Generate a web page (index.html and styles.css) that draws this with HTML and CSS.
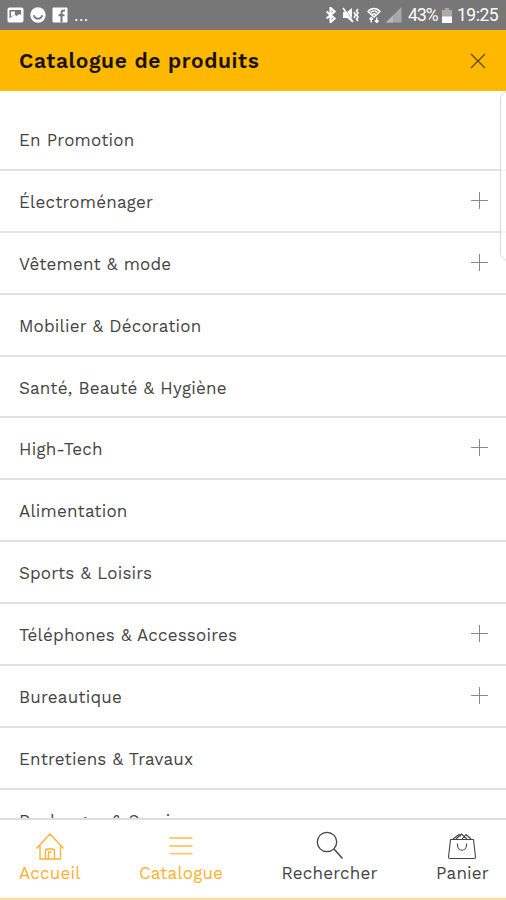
FILE: index.html
```html
<!DOCTYPE html>
<html lang="fr">
    <head>
        <meta charset="UTF-8" />
        <meta name="viewport" content="width=device-width, initial-scale=1.0" />
        <title>Catalogue de produits</title>
        <link rel="stylesheet" href="styles.css">
    </head>

    <body>
        <div class="status-bar">
            <div class="status-left">
                <svg width="17" height="16" viewBox="0 0 17 16">
                    <rect x="0.5" y="0.5" width="16" height="15" rx="2" fill="#fff" />
                    <path d="M2.500 3H14v5l-2-1-2 2-2-1-3 1.500-2.500 2z" fill="#777" />
                    <path d="M4 4.500h4V8L4 9.500z" fill="#fff" />
                </svg>
                <svg width="16" height="16" viewBox="0 0 16 16">
                    <circle cx="8" cy="8" r="7.7" fill="#fff" />
                    <path d="M3.8 8.2c1 4.6 7.4 4.6 8.4 0" fill="none" stroke="#777" stroke-width="1.8" />
                </svg>
                <svg width="16" height="16" viewBox="0 0 16 16">
                    <rect x="0.5" y="0.5" width="15" height="15" rx="1" fill="#fff" />
                    <path d="M9.5 15.5V6c0-2 1-2.8 3.5-2.5M6.5 8.3h6" fill="none" stroke="#777" stroke-width="2" />
                </svg>
                <span class="dots">...</span>
            </div>
            <div class="status-right">
                <svg class="bluetooth" width="12" height="16" viewBox="0 0 12 18">
                    <path d="M1 5l9 8-4.500 4V1L10 5l-9 8" fill="none" stroke="#fff" stroke-width="2.400" />
                </svg>
                <svg class="mute" width="17" height="16" viewBox="0 0 17 16">
                    <path d="M1 5h4l5-4v14l-5-4H1z" fill="#fff" />
                    <path d="M2 1l10 14" stroke="#777" stroke-width="1" />
                    <path d="M1 1l10 14" stroke="#fff" stroke-width="1.600" />
                    <path d="M12 5l1.500 3-1.500 3M16 2l-1.500 2L16 6l-1.500 2L16 10l-1.500 2 1.500 2" fill="none" stroke="#fff" stroke-width="1.600" />
                </svg>
                <svg class="wifi" width="14" height="16" viewBox="0 0 14 16">
                    <path d="M1 4.500c3.400-4 8.600-4 12 0L7 10z" fill="none" stroke="#fff" stroke-width="1.500" />
                    <path d="M3.500 5.500c2-2 5-2 7 0M5 7.500c1.500-1 2.500-1 4 0" fill="none" stroke="#fff" stroke-width="1.400" />
                    <path d="M4.200 15.500v-5M2.500 12.500l1.700-2 1.700 2M9.800 10.500v5M8 13.500l1.800 2 1.800-2" fill="none" stroke="#fff" stroke-width="1.400" />
                </svg>
                <svg class="signal" width="16" height="16" viewBox="0 0 16 16">
                    <path d="M0 15.5L15.5 0v15.5z" fill="#a8a8a8" />
                    <path d="M0 15.5L7 8.500v7z" fill="#b8b8b8" />
                </svg>
                <span class="battery-level">43%</span>
                <svg class="battery" width="10" height="15" viewBox="0 0 10 15">
                    <path d="M0 2h3V0h4v2h3v7H0z" fill="#aaa" />
                    <path d="M0 8.5h10V15H0z" fill="#fff" />
                </svg>
                <span class="time">19:25</span>
            </div>
        </div>

        <header class="header">
            <h1>Catalogue de produits</h1>
            <svg class="close" width="16" height="16" viewBox="0 0 16 16">
                <path d="M1 1l14 14M15 1L1 15" stroke="#5e4400" stroke-width="1.2" />
            </svg>
        </header>

        <ul class="categories">
            <li><span>En Promotion</span></li>
            <li><span>Électroménager</span><i class="plus"></i></li>
            <li><span>Vêtement &amp; mode</span><i class="plus"></i></li>
            <li><span>Mobilier &amp; Décoration</span></li>
            <li><span>Santé, Beauté &amp; Hygiène</span></li>
            <li><span>High-Tech</span><i class="plus"></i></li>
            <li><span>Alimentation</span></li>
            <li><span>Sports &amp; Loisirs</span></li>
            <li><span>Téléphones &amp; Accessoires</span><i class="plus"></i></li>
            <li><span>Bureautique</span><i class="plus"></i></li>
            <li><span>Entretiens &amp; Travaux</span></li>
            <li><span>Recharges &amp; Services</span></li>
        </ul>

        <nav class="tabs">
            <a class="tab active">
                <svg width="30" height="30" viewBox="0 0 30 30">
                    <path d="M1.500 17.500L15 3l13.500 14.500M5 14.500V28h20.500V14.500M10.500 27.500v-7q0-2.500 2.500-2.500h4q2.500 0 2.500 2.500v7M13.500 27.500V21h3" fill="none" stroke="currentColor" stroke-width="1.300" stroke-linejoin="round" />
                </svg>
                <span>Accueil</span>
            </a>
            <a class="tab active">
                <svg width="30" height="30" viewBox="0 0 30 30">
                    <path d="M3.500 7h23M3.500 15h23M3.500 22.600h23" stroke="#ffcb75" stroke-width="1.800" />
                </svg>
                <span>Catalogue</span>
            </a>
            <a class="tab">
                <svg width="30" height="30" viewBox="0 0 30 30">
                    <circle cx="12" cy="11" r="9.700" fill="none" stroke="currentColor" stroke-width="1.300" />
                    <path d="M19 18l8.500 9.500" stroke="currentColor" stroke-width="1.500" />
                </svg>
                <span>Rechercher</span>
            </a>
            <a class="tab">
                <svg width="30" height="30" viewBox="0 0 30 30">
                    <path d="M3.500 8.500h23l2 17.500q0 1.500-1.500 1.500H3q-1.500 0-1.500-1.500zM6 8l6-4.500 2 1.500M9 8l5.500-5L20 8M15 8l4-4.500L24 8M10.500 12.500v1.500c0 7 9 7 9 0v-1.500" fill="none" stroke="currentColor" stroke-width="1.100" stroke-linejoin="round" />
                </svg>
                <span>Panier</span>
            </a>
        </nav>

        <div class="edge-handle"></div>
    </body>
</html>
```

FILE: styles.css
```css
* {
    box-sizing: border-box;
}

body {
    margin: 0;
    height: 900px;
    overflow: hidden;
    display: flex;
    flex-direction: column;
    background-color: #fff;
    color: #444;
    font-family: 'Work Sans', 'Open Sans', sans-serif;
}

.status-bar {
    flex: none;
    height: 30px;
    padding: 0 8px 0 7px;
    display: flex;
    align-items: center;
    justify-content: space-between;
    background-color: #777;
    color: #fff;
    font-family: Roboto, sans-serif;
    font-size: 17.5px;
}

.status-left,
.status-right {
    display: flex;
    align-items: center;
}

.status-left {
    gap: 6px;
}

.dots {
    letter-spacing: 0.3px;
}

.bluetooth {
    margin-right: 5px;
}

.mute {
    margin-right: 8px;
}

.wifi {
    margin-right: 5px;
}

.signal {
    margin-right: 6px;
}

.battery-level {
    width: 31px;
    margin-right: 3px;
    letter-spacing: -0.9px;
}

.battery {
    margin-right: 5px;
}

.time {
    width: 41px;
    letter-spacing: -0.5px;
}

.header {
    flex: none;
    height: 61px;
    padding: 0 20px 0 19px;
    display: flex;
    align-items: center;
    justify-content: space-between;
    background-color: #ffb800;
}

.header h1 {
    margin: 0;
    color: #1a1200;
    font-size: 21px;
    font-weight: 600;
    letter-spacing: 0.6px;
}

.categories {
    flex: 1;
    min-height: 0;
    margin: 0;
    padding: 18px 0 0;
    overflow: hidden;
    list-style: none;
}

.categories li {
    height: 61.9px;
    padding: 2px 18px 0 19px;
    display: flex;
    align-items: center;
    justify-content: space-between;
    border-bottom: 2px solid #e2e2e2;
    font-size: 17px;
    letter-spacing: 0.2px;
}

.plus {
    width: 17px;
    height: 17px;
    margin-bottom: 3px;
    background: linear-gradient(#888, #888) center / 100% 1px no-repeat,
        linear-gradient(#888, #888) center / 1px 100% no-repeat;
}

.tabs {
    flex: none;
    height: 82px;
    padding: 11px 17px 0 19px;
    display: flex;
    justify-content: space-between;
    border-top: 2px solid #dedede;
    border-bottom: 2px solid #ffdca0;
}

.tab {
    display: flex;
    flex-direction: column;
    align-items: center;
    font-size: 17px;
    line-height: 25px;
    letter-spacing: 0.2px;
}

.tab.active {
    color: #ffb02e;
}

.edge-handle {
    position: absolute;
    top: 91px;
    right: -10px;
    width: 16px;
    height: 170px;
    border: 1px solid #d8d8d8;
    border-radius: 9px;
    background-color: rgba(255, 255, 255, 0.7);
}
```
